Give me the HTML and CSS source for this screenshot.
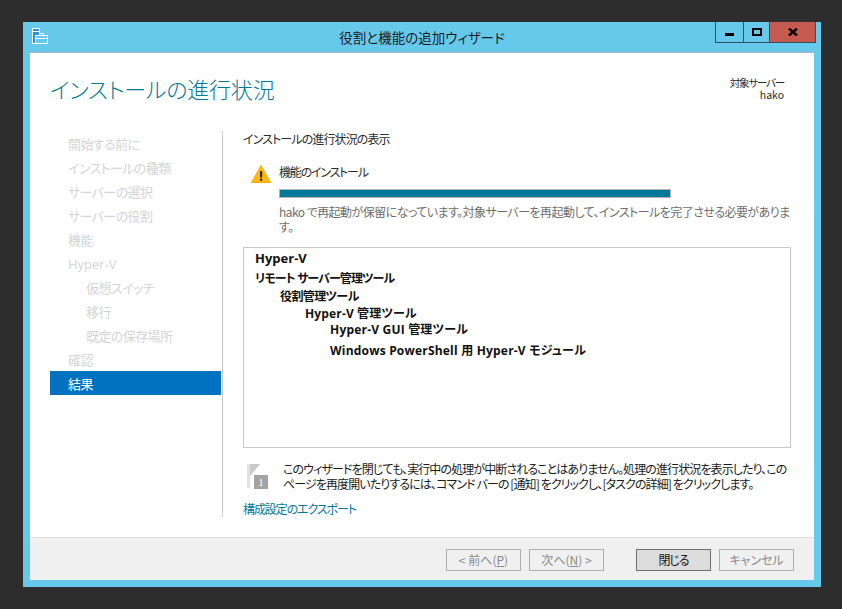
FILE: index.html
```html
<!DOCTYPE html>
<html lang="ja">

    <head>
        <meta charset="UTF-8">
        <title>役割と機能の追加ウィザード</title>
        <link rel="stylesheet" href="styles.css">
    </head>

    <body>

        <div class="win">
            <div class="titlebar">
                <svg class="appicon" width="16" height="16" viewBox="0 0 16 16">
                    <rect x="0.5" y="0.5" width="7" height="15" fill="#2f8fdc" stroke="#fff"/>
                    <rect x="1" y="3" width="6" height="1" fill="#fff"/>
                    <rect x="3.5" y="7.5" width="12" height="8" fill="#66c9ec" stroke="#fff"/>
                    <path d="M7.5 7.5V5.5H11.5V7.5M3.5 10.5H15.5" fill="none" stroke="#fff"/>
                </svg>
                <div class="wintitle">役割と機能の追加ウィザード</div>
                <div class="winbuts">
                    <div class="winbut minb"><span class="minglyph"></span></div>
                    <div class="winbut maxb"><span class="maxglyph"></span></div>
                    <div class="winbut closeb">
                        <svg width="10" height="8" viewBox="0 0 10 8"><path d="M1 0.5L9 7.5M9 0.5L1 7.5" stroke="#000" stroke-width="2.4" fill="none"/></svg>
                    </div>
                </div>
            </div>

            <div class="inner">
                <div class="head">
                    <h1 class="title">インストールの進行状況</h1>
                    <div class="target">
                        <div class="targetlab">対象サーバー</div>
                        <div>hako</div>
                    </div>
                </div>

                <div class="mid">
                    <div class="nav">
                        <div class="navi">開始する前に</div>
                        <div class="navi">インストールの種類</div>
                        <div class="navi">サーバーの選択</div>
                        <div class="navi">サーバーの役割</div>
                        <div class="navi">機能</div>
                        <div class="navi lat">Hyper-V</div>
                        <div class="navi sub">仮想スイッチ</div>
                        <div class="navi sub">移行</div>
                        <div class="navi sub">既定の保存場所</div>
                        <div class="navi">確認</div>
                        <div class="navi cur">結果</div>
                    </div>

                    <div class="content">
                        <div class="sect">インストールの進行状況の表示</div>

                        <div class="status">
                            <svg class="warn" width="20" height="18" viewBox="0 0 20 18">
                                <path d="M10 0.5L19.5 17.5H0.5Z" fill="#fdb813" stroke="#f5ad00" stroke-linejoin="round"/>
                                <rect x="9" y="6" width="2.2" height="6.5" fill="#3a2a00"/>
                                <rect x="9" y="13.6" width="2.2" height="2.2" fill="#3a2a00"/>
                            </svg>
                            <div class="statusr">
                                <div class="stname">機能のインストール</div>
                                <div class="prog"><div class="progfill"></div></div>
                                <div class="stmsg">hako で再起動が保留になっています。対象サーバーを再起動して、インストールを完了させる必要があります。</div>
                            </div>
                        </div>

                        <div class="box">
                            <div class="t0 first">Hyper-V</div>
                            <div class="t0 second">リモート サーバー管理ツール</div>
                            <div class="t1">役割管理ツール</div>
                            <div class="t2">Hyper-V 管理ツール</div>
                            <div class="t3">Hyper-V GUI 管理ツール</div>
                            <div class="t3 last">Windows PowerShell 用 Hyper-V モジュール</div>
                        </div>

                        <div class="note">
                            <svg class="flag" width="22" height="26" viewBox="0 0 22 26">
                                <rect x="0" y="0" width="3" height="24" fill="#e2e2e2"/>
                                <path d="M3 0H13L3 12Z" fill="#c9c9c9"/>
                                <rect x="7" y="11" width="14" height="14" fill="#a3a3a3"/>
                                <text x="14" y="22" class="flagnum" text-anchor="middle">1</text>
                            </svg>
                            <div class="notetxt">このウィザードを閉じても、実行中の処理が中断されることはありません。処理の進行状況を表示したり、このページを再度開いたりするには、コマンド バーの [通知] をクリックし、[タスクの詳細] をクリックします。</div>
                        </div>

                        <div class="export">構成設定のエクスポート</div>
                    </div>
                </div>

                <div class="foot">
                    <div class="but">&lt; 前へ(<u>P</u>)</div>
                    <div class="but">次へ(<u>N</u>) &gt;</div>
                    <div class="but active">閉じる</div>
                    <div class="but">キャンセル</div>
                </div>
            </div>
        </div>

    </body>

</html>
```

FILE: styles.css
```css
:root {
    --frame: #66c9ec;
    --teal: #007899;
    --dull: #d4d4d4;
    --text: #2b2b2b;
}

* {
    box-sizing: border-box;
}

body {
    margin: 0;
    height: 609px;
    overflow: hidden;
    background-color: #2d2d2d;
    font-family: "Noto Sans CJK JP", "Noto Sans", sans-serif;
    font-feature-settings: "palt";
    font-size: 12px;
    color: var(--text);
}

.win {
    width: 798px;
    height: 565px;
    margin: 22px 0 0 23px;
    padding: 0 7px 7px;
    background: var(--frame);
    display: flex;
    flex-direction: column;
}

.titlebar {
    height: 30px;
    flex: none;
    display: grid;
    grid-template-columns: 1fr auto 1fr;
    align-items: start;
}

.appicon {
    margin: 6px 0 0 2px;
}

.wintitle {
    font-size: 13.5px;
    line-height: 30px;
    color: #1c1c1c;
}

.winbuts {
    display: flex;
    justify-self: end;
    height: 21px;
    margin-right: -2px;
    border: 1px solid #35505c;
    border-top: 0;
}

.winbut {
    height: 20px;
    display: flex;
    align-items: center;
    justify-content: center;
}

.minb {
    width: 28px;
    border-right: 1px solid #35505c;
}

.maxb {
    width: 26px;
    border-right: 1px solid #35505c;
}

.closeb {
    width: 45px;
    background: #c75a50;
}

.minglyph {
    width: 9px;
    height: 3px;
    margin-top: 5px;
    background: #000;
}

.maxglyph {
    width: 10px;
    height: 8px;
    border: 2px solid #000;
}

.inner {
    flex: 1;
    display: flex;
    flex-direction: column;
    background: #fff;
    border-top: 1px solid #9fb4bd;
}

.head {
    height: 78px;
    flex: none;
    display: flex;
    justify-content: space-between;
    padding: 16px 30px 0 20px;
}

.title {
    margin: 0;
    font-size: 22px;
    font-weight: 300;
    line-height: 38px;
    letter-spacing: -0.2px;
    color: var(--teal);
}

.target {
    font-size: 10.5px;
    line-height: 12px;
    text-align: right;
    padding-top: 8px;
}

.targetlab {
    letter-spacing: -1.2px;
}

.mid {
    flex: 1;
    display: flex;
    padding-left: 20px;
}

.nav {
    width: 171px;
    margin-right: 1px;
    flex: none;
}

.navi {
    height: 24px;
    line-height: 26px;
    padding-left: 18px;
    font-size: 13px;
    letter-spacing: -0.6px;
    color: var(--dull);
}

.navi.lat {
    font-family: "Open Sans", sans-serif;
    letter-spacing: 0;
}

.navi.sub {
    padding-left: 36px;
}

.navi.cur {
    background: #0072c0;
    color: #fff;
}

.content {
    width: 569px;
    height: 386px;
    border-left: 1px solid #c8c8c8;
    padding-left: 20px;
}

.sect {
    line-height: 15px;
    letter-spacing: -0.9px;
}

.status {
    display: flex;
    margin-top: 18px;
}

.warn {
    margin: 1px 8px 0 8px;
    flex: none;
}

.statusr {
    width: 512px;
}

.stname {
    line-height: 16px;
    letter-spacing: -1.2px;
}

.prog {
    width: 392px;
    height: 9px;
    margin-top: 9px;
    border: 1px solid #b4b4b4;
}

.progfill {
    height: 100%;
    background: var(--teal);
}

.stmsg {
    margin-top: 6px;
    line-height: 15px;
    letter-spacing: -0.55px;
    color: #6d6d6d;
}

.box {
    width: 548px;
    height: 201px;
    margin-top: 13px;
    padding: 2px 11px;
    border: 1px solid #c8c8c8;
    font-family: "Open Sans", "Noto Sans CJK JP", sans-serif;
    font-weight: 700;
    color: #111;
}

.t0.first {
    font-size: 13px;
    line-height: 16px;
}

.t0.second {
    margin-top: 4px;
    line-height: 17px;
    letter-spacing: -0.9px;
}

.t1 {
    padding-left: 25px;
    line-height: 17px;
    margin-top: 1px;
    letter-spacing: -0.6px;
}

.t2 {
    padding-left: 50px;
    line-height: 17px;
    letter-spacing: 0.15px;
}

.t3 {
    padding-left: 75px;
    line-height: 17px;
    margin-top: -1px;
    letter-spacing: 0.2px;
}

.t3.last {
    margin-top: 4px;
}

.note {
    display: flex;
    margin-top: 13px;
}

.flag {
    margin: 3px 14px 0 4px;
    flex: none;
}

.flagnum {
    font-family: "Liberation Serif", serif;
    font-size: 11px;
    fill: #fff;
}

.notetxt {
    width: 505px;
    line-height: 15px;
    letter-spacing: -0.9px;
    color: #1a1a1a;
}

.export {
    margin-top: 10px;
    line-height: 16px;
    letter-spacing: -1.1px;
    color: var(--teal);
}

.foot {
    height: 43px;
    flex: none;
    display: flex;
    align-items: flex-start;
    padding: 11px 0 0 416px;
    background: #f0f0f0;
    border-top: 1px solid #dcdcdc;
}

.but {
    width: 75px;
    height: 22px;
    margin-right: 8px;
    line-height: 20px;
    text-align: center;
    border: 1px solid #adadad;
    color: #8a8a8a;
}

.but:nth-child(2) {
    margin-right: 32px;
}

.but.active {
    background: #dcdcdc;
    border-color: #707070;
    color: #111;
    letter-spacing: -1px;
}
```
